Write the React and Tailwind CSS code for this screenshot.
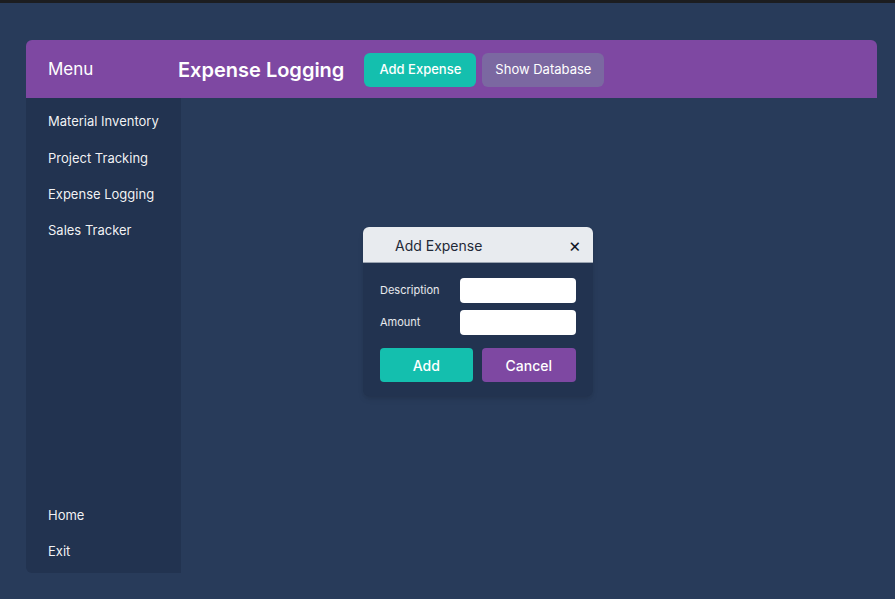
export default function App() {
  const items = ["Material Inventory", "Project Tracking", "Expense Logging", "Sales Tracker"];
  return (
    <div className="w-[895px] h-[599px] bg-[#283b5a] overflow-hidden" style={{ fontFamily: "Inter, 'Noto Sans', sans-serif" }}>
      <div className="h-[3px] bg-[#1c1d20]" />
      <div className="ml-[26px] mt-[37px] w-[851px]">
        {/* Top bar */}
        <div className="h-[58px] bg-[#7e48a2] rounded-t-md flex items-center pt-[2px]">
          <div className="w-[152px] pl-[22px] text-[17px] text-white">Menu</div>
          <h1 className="text-[20px] font-semibold text-white">Expense Logging</h1>
          <button className="ml-[20px] h-[34px] w-[112px] rounded-md bg-[#14bfae] text-white text-[13px] font-medium">
            Add Expense
          </button>
          <button className="ml-[6px] h-[34px] w-[122px] rounded-md bg-[#7b68a1] text-white text-[13px]">
            Show Database
          </button>
        </div>

        <div className="flex">
          {/* Sidebar */}
          <div className="w-[155px] h-[475px] bg-[#223350] rounded-bl-md flex flex-col justify-between pl-[22px] pt-[6px] pb-[3px] text-[13px] text-white/95">
            <div className="flex flex-col">
              {items.map((t) => (
                <div key={t} className="h-[36.3px] flex items-center">{t}</div>
              ))}
            </div>
            <div className="flex flex-col">
              <div className="h-[36px] flex items-center">Home</div>
              <div className="h-[36px] flex items-center">Exit</div>
            </div>
          </div>

          {/* Main */}
          <div className="flex-1 pl-[182px] pt-[129px]">
            <div className="w-[230px] rounded-md overflow-hidden bg-[#223350] shadow-md">
              <div className="h-[36px] bg-[#e8ebef] flex items-center justify-between pl-[32px] pr-[12px] pt-[2px] border-b border-[#9aa3b0]">
                <span className="text-[14px] text-[#1f2937]">Add Expense</span>
                <span className="text-[19px] text-[#111827] leading-none">×</span>
              </div>
              <div className="px-[17px] pt-[15px] pb-[14px]">
                <div className="flex items-center h-[25px]">
                  <label className="w-[80px] text-[11px] text-white/90">Description</label>
                  <input className="w-[116px] h-[25px] bg-white rounded-sm outline-none" />
                </div>
                <div className="flex items-center h-[25px] mt-[7px]">
                  <label className="w-[80px] text-[11px] text-white/90">Amount</label>
                  <input className="w-[116px] h-[25px] bg-white rounded-sm outline-none" />
                </div>
                <div className="flex gap-[9px] mt-[13px]">
                  <button className="w-[93px] h-[34px] rounded-sm bg-[#14bfae] text-white text-[14px] font-medium">Add</button>
                  <button className="w-[95px] h-[34px] rounded-sm bg-[#7e48a2] text-white text-[14px] font-medium">Cancel</button>
                </div>
              </div>
            </div>
          </div>
        </div>
      </div>
    </div>
  );
}
